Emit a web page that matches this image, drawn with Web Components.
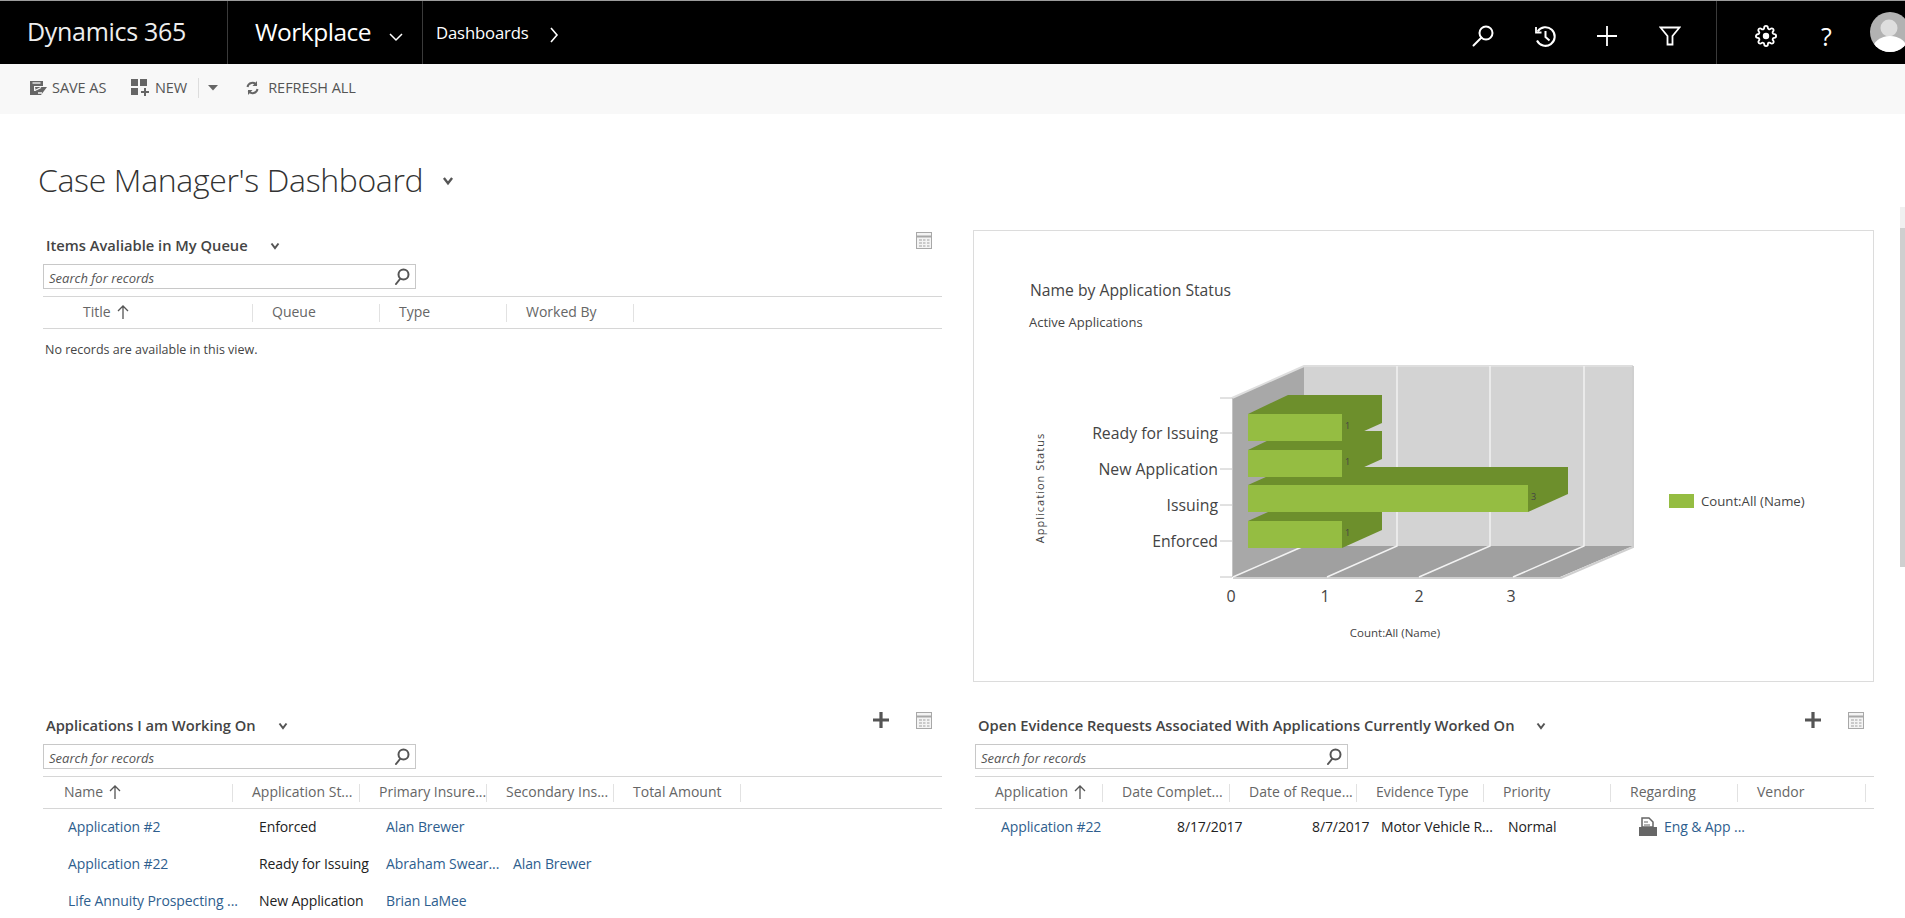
<!DOCTYPE html>
<html>
<head>
<meta charset="utf-8">
<title>Case Manager's Dashboard</title>
<style>
  html, body { margin: 0; height: 918px; overflow: hidden; background: #fff; }
  body { font-family: "Open Sans", "Noto Sans", sans-serif; color: #333; }
</style>
</head>
<body>
<dyn-topbar></dyn-topbar>
<dyn-toolbar></dyn-toolbar>
<dyn-dashboard heading="Case Manager's Dashboard">
  <dyn-list-panel heading="Items Avaliable in My Queue" style="--cols: 210px 127px 127px 127px">
    <dyn-head-row slot="head">
      <dyn-head-cell sorted style="--pad: 40px">Title</dyn-head-cell>
      <dyn-head-cell>Queue</dyn-head-cell>
      <dyn-head-cell>Type</dyn-head-cell>
      <dyn-head-cell>Worked By</dyn-head-cell>
    </dyn-head-row>
    <dyn-empty>No records are available in this view.</dyn-empty>
  </dyn-list-panel>

  <dyn-chart></dyn-chart>

  <dyn-list-panel heading="Applications I am Working On" add style="--cols: 190px 127px 127px 127px 127px">
    <dyn-head-row slot="head">
      <dyn-head-cell sorted style="--pad: 21px">Name</dyn-head-cell>
      <dyn-head-cell>Application St...</dyn-head-cell>
      <dyn-head-cell>Primary Insure...</dyn-head-cell>
      <dyn-head-cell>Secondary Ins...</dyn-head-cell>
      <dyn-head-cell>Total Amount</dyn-head-cell>
    </dyn-head-row>
    <dyn-row>
      <dyn-cell link style="--pad: 25px">Application #2</dyn-cell><dyn-cell>Enforced</dyn-cell><dyn-cell link>Alan Brewer</dyn-cell><dyn-cell></dyn-cell><dyn-cell></dyn-cell>
    </dyn-row>
    <dyn-row>
      <dyn-cell link style="--pad: 25px">Application #22</dyn-cell><dyn-cell>Ready for Issuing</dyn-cell><dyn-cell link>Abraham Swear...</dyn-cell><dyn-cell link>Alan Brewer</dyn-cell><dyn-cell></dyn-cell>
    </dyn-row>
    <dyn-row>
      <dyn-cell link style="--pad: 25px">Life Annuity Prospecting ...</dyn-cell><dyn-cell>New Application</dyn-cell><dyn-cell link>Brian LaMee</dyn-cell><dyn-cell></dyn-cell><dyn-cell></dyn-cell>
    </dyn-row>
  </dyn-list-panel>

  <dyn-list-panel heading="Open Evidence Requests Associated With Applications Currently Worked On" add style="--cols: 128px 127px 127px 127px 127px 127px 128px; margin-left: 2px">
    <dyn-head-row slot="head">
      <dyn-head-cell sorted style="--pad: 20px">Application</dyn-head-cell>
      <dyn-head-cell>Date Complet...</dyn-head-cell>
      <dyn-head-cell>Date of Reque...</dyn-head-cell>
      <dyn-head-cell>Evidence Type</dyn-head-cell>
      <dyn-head-cell>Priority</dyn-head-cell>
      <dyn-head-cell>Regarding</dyn-head-cell>
      <dyn-head-cell>Vendor</dyn-head-cell>
    </dyn-head-row>
    <dyn-row>
      <dyn-cell link>Application #22</dyn-cell>
      <dyn-cell style="--pad: 74px">8/17/2017</dyn-cell>
      <dyn-cell style="--pad: 82px">8/7/2017</dyn-cell>
      <dyn-cell style="--pad: 24px">Motor Vehicle R...</dyn-cell>
      <dyn-cell style="--pad: 24px">Normal</dyn-cell>
      <dyn-cell link style="--pad: 28px"><svg width="18" height="20" viewBox="0 0 18 20" style="vertical-align:-5px;margin-right:7px"><path d="M3 1h7l4 4v5H3z" fill="#fff" stroke="#666" stroke-width="1.5"/><path d="M5 5h4M5 8h6" stroke="#666"/><path d="M0 10h18v9H0z" fill="#666"/></svg>Eng &amp; App ...</dyn-cell>
      <dyn-cell></dyn-cell>
    </dyn-row>
  </dyn-list-panel>
</dyn-dashboard>

<script>
const chevron = (size, color, width) => `<svg width="${size}" height="${size}" viewBox="0 0 12 12" fill="none" stroke="${color}" stroke-width="${width}"><path d="M2.5 3.5L6 8l3.500-4.500"/></svg>`;

class DynTopbar extends HTMLElement {
  connectedCallback() {
    this.attachShadow({ mode: 'open' });
    this.shadowRoot.innerHTML = `
      <style>
        :host { display: flex; height: 64px; box-sizing: border-box; border-top: 1px solid #9c9c9c; background: #000; color: #fff; overflow: hidden; align-items: stretch; }
        .brand { width: 228px; flex: none; box-sizing: border-box; padding-left: 27px; border-right: 1px solid #3a3a3a; font-size: 25px; letter-spacing: -.3px; line-height: 60px; color: #eee; }
        .area { width: 195px; flex: none; box-sizing: border-box; padding-left: 27px; border-right: 1px solid #3a3a3a; font-size: 24.5px; letter-spacing: -.5px; padding-bottom: 2px; display: flex; align-items: center; }
        .area svg { margin-left: 17px; margin-top: 10px; }
        .crumb { flex: 1; padding-left: 13px; font-size: 16.7px; letter-spacing: -.15px; display: flex; align-items: center; }
        .crumb svg { margin-left: 19px; margin-top: 4px; }
        .tools { display: flex; flex: none; padding-right: 15px; border-right: 1px solid #3a3a3a; }
        .btn { width: 62px; flex: none; display: flex; align-items: center; justify-content: center; padding-top: 7px; box-sizing: border-box; }
        .sys { display: flex; flex: none; padding-left: 18px; }
        .q { font-size: 25px; line-height: 1; }
        .avatar { flex: none; margin: 11px -5px 0 13px; }
      </style>
      <div class="brand">Dynamics 365</div>
      <div class="area">Workplace<svg width="16" height="16" viewBox="0 0 16 16" fill="none" stroke="#fff" stroke-width="1.5"><path d="M2 5l6 6 6-6"/></svg></div>
      <div class="crumb">Dashboards<svg width="12" height="18" viewBox="0 0 12 18" fill="none" stroke="#fff" stroke-width="1.6"><path d="M3 2l6 7-6 7"/></svg></div>
      <div class="tools">
        <div class="btn" style="padding-right:2px"><svg width="22" height="22" viewBox="0 0 22 22" fill="none" stroke="#fff" stroke-width="2"><circle cx="14" cy="8" r="6.5"/><path d="M9.5 12.5 1.5 20.5" stroke-linecap="round"/></svg></div>
        <div class="btn" style="padding-right:3px"><svg width="24" height="24" viewBox="0 0 24 24" fill="none" stroke="#fff" stroke-width="2"><path d="M4.6 7.5A9.3 9.3 0 1 1 4 16.5"/><path d="M3 3v5.5h5.5" stroke-width="1.8"/><path d="M12.5 7v6l4 3.5"/></svg></div>
        <div class="btn" style="padding-right:2px"><svg width="22" height="22" viewBox="0 0 22 22" fill="none" stroke="#fff" stroke-width="1.8"><path d="M11 1v20M1 11h20"/></svg></div>
        <div class="btn"><svg width="22" height="20" viewBox="0 0 22 20" fill="none" stroke="#fff" stroke-width="1.8"><path d="M1.5 1.5h19l-7 8.500v8.500h-5V10z"/></svg></div>
      </div>
      <div class="sys">
        <div class="btn" style="width:61px"><svg width="22" height="22" viewBox="0 0 24 24" fill="none" stroke="#fff" stroke-width="2"><circle cx="12" cy="12" r="2.5" fill="#fff"/><path d="M19.4 15a1.65 1.65 0 0 0 .33 1.82l.06.06a2 2 0 0 1 0 2.83 2 2 0 0 1-2.83 0l-.06-.06a1.65 1.65 0 0 0-1.82-.33 1.65 1.65 0 0 0-1 1.51V21a2 2 0 0 1-2 2 2 2 0 0 1-2-2v-.09A1.65 1.65 0 0 0 9 19.4a1.65 1.65 0 0 0-1.82.33l-.06.06a2 2 0 0 1-2.83 0 2 2 0 0 1 0-2.83l.06-.06a1.65 1.65 0 0 0 .33-1.82 1.65 1.65 0 0 0-1.51-1H3a2 2 0 0 1-2-2 2 2 0 0 1 2-2h.09A1.65 1.65 0 0 0 4.6 9a1.65 1.65 0 0 0-.33-1.82l-.06-.06a2 2 0 0 1 0-2.83 2 2 0 0 1 2.83 0l.06.06a1.65 1.65 0 0 0 1.82.33H9a1.65 1.65 0 0 0 1-1.51V3a2 2 0 0 1 2-2 2 2 0 0 1 2 2v.09a1.65 1.65 0 0 0 1 1.51 1.65 1.65 0 0 0 1.82-.33l.06-.06a2 2 0 0 1 2.83 0 2 2 0 0 1 0 2.83l-.06.06a1.65 1.65 0 0 0-.33 1.82V9a1.65 1.65 0 0 0 1.51 1H21a2 2 0 0 1 2 2 2 2 0 0 1-2 2h-.09a1.65 1.65 0 0 0-1.51 1z"/></svg></div>
        <div class="btn q" style="width:61px">?</div>
      </div>
      <svg class="avatar" width="40" height="40" viewBox="0 0 40 40"><defs><clipPath id="c"><circle cx="20" cy="20" r="20"/></clipPath></defs><circle cx="20" cy="20" r="20" fill="#b2b2b2"/><g clip-path="url(#c)"><circle cx="19" cy="16" r="8.5" fill="#dedede"/><ellipse cx="20" cy="37" rx="17" ry="13" fill="#fff"/></g></svg>
    `;
  }
}
customElements.define('dyn-topbar', DynTopbar);

class DynToolbar extends HTMLElement {
  connectedCallback() {
    this.attachShadow({ mode: 'open' });
    this.shadowRoot.innerHTML = `
      <style>
        :host { display: flex; align-items: center; height: 50px; background: #f8f8f8; color: #555; font-size: 14.5px; letter-spacing: -.05px; padding: 0 0 3px 29px; box-sizing: border-box; }
        .item { display: flex; align-items: center; flex: none; }
        svg { flex: none; }
        .sep { width: 1px; height: 20px; background: #ddd; flex: none; margin: 0 9px 0 11px; }
      </style>
      <div class="item" style="gap:5px;width:102px"><svg width="18" height="18" viewBox="0 0 18 18"><path d="M1 2h13v5H5v5h4l-1 4H1z" fill="#666"/><path d="M6 8h12l-6 8H8z" fill="#666"/><path d="M7 11l5-2.500M9 14h4" stroke="#f8f8f8" stroke-width="1.3"/><path d="M3.5 4h8" stroke="#f8f8f8" stroke-width="1.3"/></svg>SAVE AS</div>
      <div class="item" style="gap:5px"><svg width="19" height="19" viewBox="0 0 19 19" fill="#666"><path d="M0 1h7v7H0zM9 1h7v7H9zM0 10h7v7H0z"/><path d="M13 10h2v3h3v2h-3v3h-2v-3h-3v-2h3z"/></svg>NEW</div>
      <div class="sep"></div>
      <svg width="10" height="6" viewBox="0 0 10 6" fill="#666" style="margin-right:28px"><path d="M0 0h10L5 5.5z"/></svg>
      <div class="item" style="gap:9px"><svg width="13" height="14" viewBox="0 0 13 14" fill="none" stroke="#666" stroke-width="2"><path d="M1.5 6A5 5 0 0 1 10.500 4M11.500 8A5 5 0 0 1 2.500 10"/><path d="M11 0v5H6.500M2 14V9h4.500" fill="#666" stroke="none"/></svg>REFRESH ALL</div>
    `;
  }
}
customElements.define('dyn-toolbar', DynToolbar);

class DynDashboard extends HTMLElement {
  connectedCallback() {
    this.attachShadow({ mode: 'open' });
    this.shadowRoot.innerHTML = `
      <style>
        :host { display: block; position: relative; height: 804px; box-sizing: border-box; overflow: hidden; }
        h1 { margin: 0; padding: 45px 0 0 38px; height: 116px; box-sizing: border-box; font-size: 32px; letter-spacing: -.35px; line-height: 42px; font-weight: 300; color: #333; display: flex; align-items: flex-start; }
        h1 svg { margin: 15px 0 0 18px; }
        .grid { display: grid; grid-template-columns: 899px 901px; grid-template-rows: 480px auto; column-gap: 31px; padding-left: 43px; }
        .arrow { position: absolute; right: 0; top: 93px; width: 5px; height: 21px; background: #f0f0f0; }
        .scroll { position: absolute; right: 0; top: 114px; width: 5px; height: 339px; background: #cfcfcf; }
      </style>
      <h1></h1>
      <div class="grid"><slot></slot></div>
      <div class="arrow"></div>
      <div class="scroll"></div>
    `;
    const h = this.shadowRoot.querySelector('h1');
    h.innerHTML = this.getAttribute('heading') + chevron(14, '#555', 2);
  }
}
customElements.define('dyn-dashboard', DynDashboard);

const gridIcon = `<svg width="16" height="17" viewBox="0 0 16 17"><rect x=".5" y=".5" width="15" height="16" fill="#f4f4f4" stroke="#a8a8a8"/><path d="M1 4.5h14" stroke="#a8a8a8" stroke-width="2"/><path d="M3 8h3M7 8h2.500M11 8h2.500M3 11h3M7 11h2.500M11 11h2.500M3 14h3M7 14h2.500M11 14h2.500" stroke="#a0a0a0"/></svg>`;
const plusIcon = `<svg width="16" height="16" viewBox="0 0 16 16"><path d="M8 0v16M0 8h16" stroke="#555" stroke-width="3.2"/></svg>`;

class DynListPanel extends HTMLElement {
  connectedCallback() {
    this.attachShadow({ mode: 'open' });
    this.shadowRoot.innerHTML = `
      <style>
        :host { display: block; font-size: 14px; }
        .head { display: flex; height: 34px; padding-left: 3px; }
        .name { font-size: 14.7px; font-weight: 600; color: #444; line-height: 30px; white-space: nowrap; }
        .chev { margin: 7px 0 0 21px; }
        .actions { margin-left: auto; display: flex; gap: 27px; padding: 2px 10px 0 0; align-items: flex-start; }
        .search { width: 373px; height: 25px; box-sizing: border-box; border: 1px solid #c8c8c8; display: flex; align-items: center; font-size: 13px; font-style: italic; color: #555; padding: 0 5px; }
        .search span { flex: 1; padding-top: 3px; }
        .hd { margin-top: 7px; border-top: 1px solid #d6d6d6; border-bottom: 1px solid #d6d6d6; }
      </style>
      <div class="head">
        <div class="name"></div>
        <div class="chev">${chevron(12, '#555', 2)}</div>
        <div class="actions">${this.hasAttribute('add') ? plusIcon : ''}${gridIcon}</div>
      </div>
      <div class="search"><span>Search for records</span><svg width="16" height="17" viewBox="0 0 16 17" fill="none" stroke="#555" stroke-width="2"><circle cx="9.5" cy="6.5" r="5"/><path d="M6 11l-4 5" stroke-linecap="round"/></svg></div>
      <div class="hd"><slot name="head"></slot></div>
      <slot></slot>
    `;
    this.shadowRoot.querySelector('.name').textContent = this.getAttribute('heading');
  }
}
customElements.define('dyn-list-panel', DynListPanel);

class DynHeadRow extends HTMLElement {
  connectedCallback() {
    this.attachShadow({ mode: 'open' });
    this.shadowRoot.innerHTML = `<style>:host { display: grid; grid-template-columns: var(--cols); height: 31px; align-items: center; }</style><slot></slot>`;
  }
}
customElements.define('dyn-head-row', DynHeadRow);

class DynHeadCell extends HTMLElement {
  connectedCallback() {
    this.attachShadow({ mode: 'open' });
    const arrow = this.hasAttribute('sorted') ? `<svg width="12" height="14" viewBox="0 0 12 14" fill="none" stroke="#555" stroke-width="1.3" style="margin-left:6px;vertical-align:-2px"><path d="M6 14V1M1 6l5-5 5 5"/></svg>` : '';
    this.shadowRoot.innerHTML = `
      <style>
        :host { display: block; min-width: 0; }
        div { height: 18px; line-height: 15px; box-sizing: border-box; padding-left: var(--pad, 19px); border-right: 1px solid #e2e2e2; font-size: 14px; color: #666; white-space: nowrap; overflow: hidden; }
      </style>
      <div><slot></slot>${arrow}</div>
    `;
  }
}
customElements.define('dyn-head-cell', DynHeadCell);

class DynRow extends HTMLElement {
  connectedCallback() {
    this.attachShadow({ mode: 'open' });
    this.shadowRoot.innerHTML = `<style>:host { display: grid; grid-template-columns: var(--cols); height: 37px; align-items: center; }</style><slot></slot>`;
  }
}
customElements.define('dyn-row', DynRow);

class DynCell extends HTMLElement {
  connectedCallback() {
    this.attachShadow({ mode: 'open' });
    this.shadowRoot.innerHTML = `
      <style>
        :host { display: block; min-width: 0; padding-left: var(--pad, 26px); padding-bottom: 2px; font-size: 14px; letter-spacing: -.1px; color: #222; white-space: nowrap; }
        :host([link]) { color: #2e5e8e; }
      </style>
      <slot></slot>
    `;
  }
}
customElements.define('dyn-cell', DynCell);

class DynEmpty extends HTMLElement {
  connectedCallback() {
    this.attachShadow({ mode: 'open' });
    this.shadowRoot.innerHTML = `<style>:host { display: block; padding: 12px 0 0 2px; font-size: 12.5px; line-height: 18px; color: #444; }</style><slot></slot>`;
  }
}
customElements.define('dyn-empty', DynEmpty);

class DynChart extends HTMLElement {
  connectedCallback() {
    this.attachShadow({ mode: 'open' });
    const front = '#95bd42', side = '#6d8f2c';
    const bar = (y, x2, backTop) => `<path d="M1248 ${y}L1288 ${backTop}H${x2 + 40}V${y + 9}L${x2} ${y + 27}Z" fill="${side}"/>`;
    const face = (y, x2) => `<rect x="1248" y="${y}" width="${x2 - 1248}" height="27" fill="${front}"/>`;
    const bars = [[414, 1342, 395], [450, 1342, 431], [485, 1528, 467], [521, 1342, 503]];
    const cats = [['Ready for Issuing', 434], ['New Application', 470], ['Issuing', 506], ['Enforced', 542]];
    this.shadowRoot.innerHTML = `
      <style>
        :host { display: block; height: 452px; box-sizing: border-box; border: 1px solid #dcdcdc; }
        svg { display: block; }
        text { font-family: "Open Sans", "Noto Sans", sans-serif; fill: #444; }
      </style>
      <svg width="899" height="450" viewBox="974 231 899 450">
        <text x="1030" y="296" font-size="15.7" fill="#333">Name by Application Status</text>
        <text x="1029" y="327" font-size="13">Active Applications</text>

        <path d="M1304 366H1633V547H1304z" fill="#d3d3d3"/>
        <path d="M1232.5 398L1304 366V547L1232.5 577z" fill="#a8a8a8"/>
        <path d="M1233 577L1304 546H1633L1560 577z" fill="#a0a0a0"/>
        <path d="M1232 398L1304 366H1633" fill="none" stroke="#dedede" stroke-width="2"/>
        <path d="M1633 366V547L1561 578H1233" fill="none" stroke="#cfcfcf" stroke-width="2"/>
        <path d="M1397 366V546L1327 577M1490 366V546L1419 577M1584 366V546L1513 577M1304 546L1233 577" fill="none" stroke="#f2f2f2" stroke-width="1.5"/>

        ${bars.map(b => bar(b[0], b[1], b[2])).join('')}
        ${bars.map(b => face(b[0], b[1])).join('')}

        <path d="M1220 398H1232M1220 577H1232M1232.5 398V577M1220 433H1232M1220 469H1232M1220 505H1232M1220 541H1232" stroke="#c4c4c4" fill="none"/>
        ${cats.map(c => `<text x="1218" y="${c[1] + 5}" font-size="15.8" text-anchor="end">${c[0]}</text>`).join('')}

        <text x="1345" y="429" font-size="9" fill="#333">1</text>
        <text x="1345" y="465" font-size="9" fill="#333">1</text>
        <text x="1531" y="500" font-size="9" fill="#333">3</text>
        <text x="1345" y="536" font-size="9" fill="#333">1</text>

        ${[['0', 1231], ['1', 1325], ['2', 1419], ['3', 1511]].map(t => `<text x="${t[1]}" y="602" font-size="16" text-anchor="middle">${t[0]}</text>`).join('')}
        <text x="1395" y="637" font-size="11.5" text-anchor="middle">Count:All (Name)</text>
        <text transform="translate(1044 488) rotate(-90)" font-size="11" letter-spacing="1" text-anchor="middle">Application Status</text>

        <rect x="1669" y="494" width="25" height="14" fill="${front}"/>
        <text x="1701" y="506" font-size="13.2">Count:All (Name)</text>
      </svg>
    `;
  }
}
customElements.define('dyn-chart', DynChart);
</script>
</body>
</html>
